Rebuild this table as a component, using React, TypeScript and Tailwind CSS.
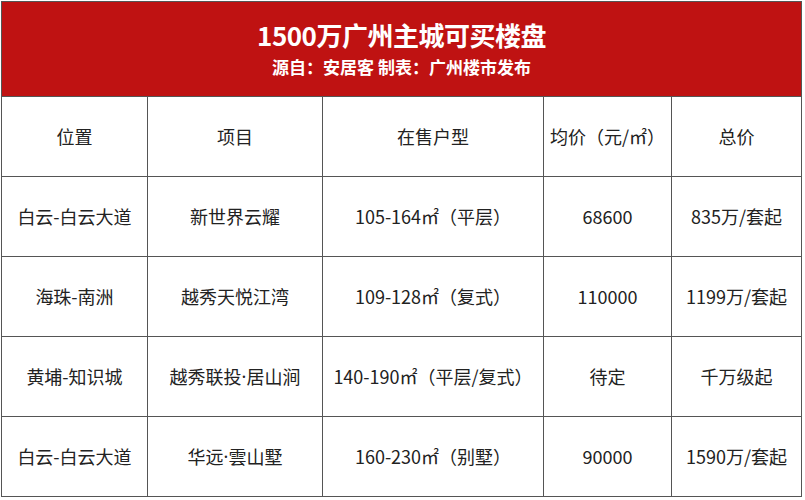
import React from 'react';

const headers = ['位置', '项目', '在售户型', '均价（元/㎡）', '总价'];

const rows: string[][] = [
  ['白云-白云大道', '新世界云耀', '105-164㎡（平层）', '68600', '835万/套起'],
  ['海珠-南洲', '越秀天悦江湾', '109-128㎡（复式）', '110000', '1199万/套起'],
  ['黄埔-知识城', '越秀联投·居山涧', '140-190㎡（平层/复式）', '待定', '千万级起'],
  ['白云-白云大道', '华远·雲山墅', '160-230㎡（别墅）', '90000', '1590万/套起'],
];

// the middle dot is narrow in the original, so it's set in a latin font
const renderText = (s: string) => {
  const parts = s.split('·');
  return parts.map((p, i) => (
    <React.Fragment key={i}>
      {i > 0 && <span style={{ fontFamily: '"Noto Sans", sans-serif' }}>·</span>}
      {p}
    </React.Fragment>
  ));
};

const Cell: React.FC<{ children: React.ReactNode }> = ({ children }) => (
  <div className="h-[79px] bg-white flex items-center justify-center text-[18px] text-[#222] whitespace-nowrap">
    {children}
  </div>
);

const App: React.FC = () => {
  return (
    <div
      className="w-[805px] h-[500px] bg-white pl-px pt-px"
      style={{ fontFamily: '"Noto Sans CJK SC", "Noto Sans", sans-serif' }}
    >
      <div className="w-[801px] border border-[#555] bg-[#555] grid grid-cols-[145px_174px_220px_127px_129px] gap-px">
        <div className="col-span-5 h-[94px] bg-[#bf1212] text-white flex flex-col items-center justify-center">
          <h1 className="mt-[-2px] text-[26px] font-bold leading-none tracking-[-0.5px]">1500万广州主城可买楼盘</h1>
          <p className="mt-[10px] text-[17px] font-bold leading-none">源自：安居客 制表：广州楼市发布</p>
        </div>
        {headers.map((h) => (
          <Cell key={h}>{h}</Cell>
        ))}
        {rows.map((r, i) =>
          r.map((c, j) => <Cell key={`${i}-${j}`}>{renderText(c)}</Cell>)
        )}
      </div>
    </div>
  );
};

export default App;
